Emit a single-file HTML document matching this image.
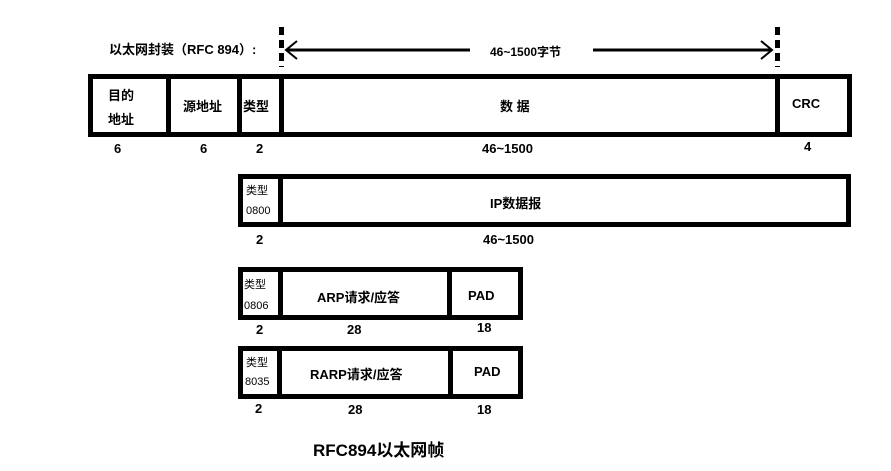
<!DOCTYPE html>
<html><head><meta charset="utf-8"><style>
body{margin:0;width:891px;height:471px;background:#fff;position:relative;overflow:hidden;font-family:"Liberation Sans","Noto Sans CJK SC",sans-serif;font-weight:bold;font-size:13px;color:#000}
.b{position:absolute;border:5px solid #000;box-sizing:border-box}
.v{position:absolute;width:5px;background:#000}
.t{position:absolute;white-space:nowrap}
.s{font-weight:normal;font-size:11px}
.d{position:absolute;width:5px;background:repeating-linear-gradient(#000 0 8px,transparent 8px 13px)}
</style></head><body>
<div class="t" style="left:109px;top:39px">以太网封装（RFC 894）:</div>
<div class="d" style="left:279px;top:27px;height:40px"></div>
<div class="d" style="left:775px;top:27px;height:40px"></div>
<svg style="position:absolute;left:284px;top:38px" width="492" height="24"><line x1="2" y1="12" x2="186" y2="12" stroke="#000" stroke-width="3"/><line x1="309" y1="12" x2="488" y2="12" stroke="#000" stroke-width="3"/><polyline points="13,3 2,12 13,21" fill="none" stroke="#000" stroke-width="2"/><polyline points="477,3 488,12 477,21" fill="none" stroke="#000" stroke-width="2"/></svg>
<div class="t" style="left:490px;top:43px;font-size:12px">46~1500字节</div>

<div class="b" style="left:88px;top:74px;width:764px;height:63px"></div>
<div class="v" style="left:166px;top:74px;height:63px"></div>
<div class="v" style="left:237px;top:74px;height:63px"></div>
<div class="v" style="left:279px;top:74px;height:63px"></div>
<div class="v" style="left:775px;top:74px;height:63px"></div>
<div class="t" style="left:108px;top:85px">目的</div>
<div class="t" style="left:108px;top:109px">地址</div>
<div class="t" style="left:183px;top:96px">源地址</div>
<div class="t" style="left:243px;top:96px">类型</div>
<div class="t" style="left:500px;top:96px">数 据</div>
<div class="t" style="left:792px;top:96px">CRC</div>
<div class="t" style="left:114px;top:141px">6</div>
<div class="t" style="left:200px;top:141px">6</div>
<div class="t" style="left:256px;top:141px">2</div>
<div class="t" style="left:482px;top:141px">46~1500</div>
<div class="t" style="left:804px;top:139px">4</div>

<div class="b" style="left:238px;top:174px;width:613px;height:53px"></div>
<div class="v" style="left:278px;top:174px;height:53px"></div>
<div class="t s" style="left:246px;top:182px">类型</div>
<div class="t s" style="left:246px;top:205px">0800</div>
<div class="t" style="left:490px;top:193px">IP数据报</div>
<div class="t" style="left:256px;top:232px">2</div>
<div class="t" style="left:483px;top:232px">46~1500</div>

<div class="b" style="left:238px;top:267px;width:285px;height:53px"></div>
<div class="v" style="left:278px;top:267px;height:53px"></div>
<div class="v" style="left:447px;top:267px;height:53px"></div>
<div class="t s" style="left:244px;top:276px">类型</div>
<div class="t s" style="left:244px;top:300px">0806</div>
<div class="t" style="left:317px;top:287px">ARP请求/应答</div>
<div class="t" style="left:468px;top:288px">PAD</div>
<div class="t" style="left:256px;top:322px">2</div>
<div class="t" style="left:347px;top:322px">28</div>
<div class="t" style="left:477px;top:320px">18</div>

<div class="b" style="left:238px;top:346px;width:285px;height:53px"></div>
<div class="v" style="left:277px;top:346px;height:53px"></div>
<div class="v" style="left:448px;top:346px;height:53px"></div>
<div class="t s" style="left:246px;top:354px">类型</div>
<div class="t s" style="left:245px;top:376px">8035</div>
<div class="t" style="left:310px;top:364px">RARP请求/应答</div>
<div class="t" style="left:474px;top:364px">PAD</div>
<div class="t" style="left:255px;top:401px">2</div>
<div class="t" style="left:348px;top:402px">28</div>
<div class="t" style="left:477px;top:402px">18</div>

<div class="t" style="left:313px;top:436px;font-size:17px">RFC894以太网帧</div>
</body></html>
